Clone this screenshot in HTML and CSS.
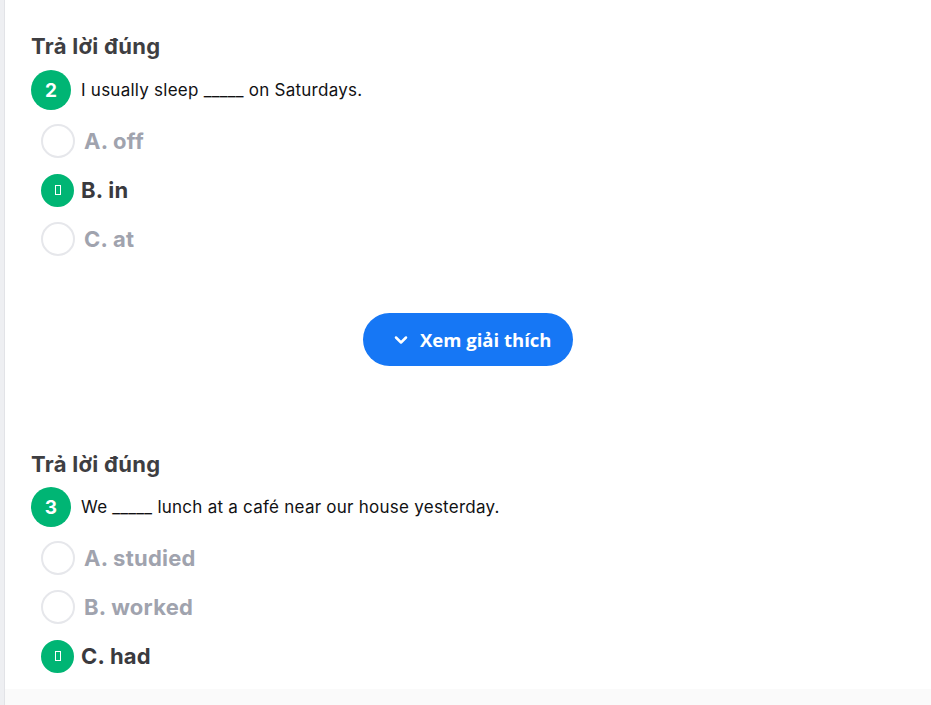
FILE: index.html
```html
<!DOCTYPE html>
<html lang="vi">
<head>
<meta charset="utf-8">
<title>Trả lời đúng</title>
<link rel="stylesheet" href="styles.css">
</head>
<body>
<div class="page">
  <main class="card">
    <section class="question">
      <h2 class="q-title">Trả lời đúng</h2>
      <div class="q-row">
        <span class="q-num">2</span>
        <p class="q-text">I usually sleep _____ on Saturdays.</p>
      </div>
      <ul class="options">
        <li class="option"><span class="radio"></span><span class="label">A. off</span></li>
        <li class="option selected"><span class="radio"><span class="tofu"></span></span><span class="label">B. in</span></li>
        <li class="option"><span class="radio"></span><span class="label">C. at</span></li>
      </ul>
      <div class="actions">
        <button class="explain-btn" type="button">
          <svg class="chev" width="14" height="10" viewBox="0 0 14 10" aria-hidden="true"><path d="M2 2.5 L7 7.5 L12 2.5" fill="none" stroke="#fff" stroke-width="2.5" stroke-linecap="round" stroke-linejoin="round"/></svg>
          <span>Xem giải thích</span>
        </button>
      </div>
    </section>

    <section class="question second">
      <h2 class="q-title">Trả lời đúng</h2>
      <div class="q-row">
        <span class="q-num">3</span>
        <p class="q-text">We _____ lunch at a café near our house yesterday.</p>
      </div>
      <ul class="options">
        <li class="option"><span class="radio"></span><span class="label">A. studied</span></li>
        <li class="option"><span class="radio"></span><span class="label">B. worked</span></li>
        <li class="option selected"><span class="radio"><span class="tofu"></span></span><span class="label">C. had</span></li>
      </ul>
    </section>
  </main>
</div>
</body>
</html>
```
FILE: styles.css
```css
* { box-sizing: border-box; }
html, body { margin: 0; padding: 0; }
body {
  font-family: Inter, "Noto Sans", sans-serif;
  background: #fafafa;
  height: 705px;
  overflow: hidden;
}
.page {
  display: flex;
  min-height: 705px;
  border-left: 4px solid #eeeff2;
}
.page::before {
  content: "";
  width: 1px;
  background: #e2e3e7;
}
.card {
  flex: 1;
  background: #fff;
  align-self: flex-start;
  padding: 32px 26px 16px 26px;
}
.q-title {
  margin: 0;
  font-size: 22px;
  line-height: 28px;
  font-weight: 700;
  color: #3e3e42;
  letter-spacing: 0.3px;
}
.q-row {
  display: flex;
  align-items: center;
  gap: 10px;
  margin-top: 10px;
}
.second .q-row { margin-top: 9px; }
.q-num {
  width: 40px;
  height: 40px;
  border-radius: 50%;
  background: #00b574;
  color: #fff;
  font-weight: 700;
  font-size: 19px;
  display: flex;
  align-items: center;
  justify-content: center;
  flex: none;
}
.q-text {
  margin: 0;
  font-size: 17px;
  letter-spacing: 0.25px;
  color: #111113;
}
.options {
  list-style: none;
  margin: 14px 0 0 0;
  padding: 0 0 0 10px;
  display: flex;
  flex-direction: column;
  gap: 15px;
}
.option {
  display: flex;
  align-items: center;
  height: 34px;
  gap: 9px;
}
.radio {
  width: 34px;
  height: 34px;
  border-radius: 50%;
  border: 2px solid #e6e7eb;
  flex: none;
  display: flex;
  align-items: center;
  justify-content: center;
}
.selected .radio {
  background: #00b574;
  border-color: #00b574;
  width: 33px;
  height: 33px;
}
.tofu {
  width: 6px;
  height: 10px;
  border: 1px solid #fff;
}
.label {
  font-size: 22px;
  font-weight: 700;
  color: #a0a3ae;
  letter-spacing: 0.25px;
}
.selected .label {
  color: #3a3a3e;
}
.selected .radio + .label { margin-left: -2px; }
.actions {
  display: flex;
  justify-content: center;
  margin-top: 57px;
  margin-bottom: 84px;
}
.explain-btn {
  display: flex;
  align-items: center;
  justify-content: flex-start;
  gap: 12px;
  height: 53px;
  width: 210px;
  border: none;
  border-radius: 27px;
  background: #1677f5;
  color: #fff;
  font-family: "Open Sans", "Noto Sans", sans-serif;
  font-size: 18.5px;
  font-weight: 700;
  padding: 0 0 0 31px;
}
.chev { flex: none; }
```
